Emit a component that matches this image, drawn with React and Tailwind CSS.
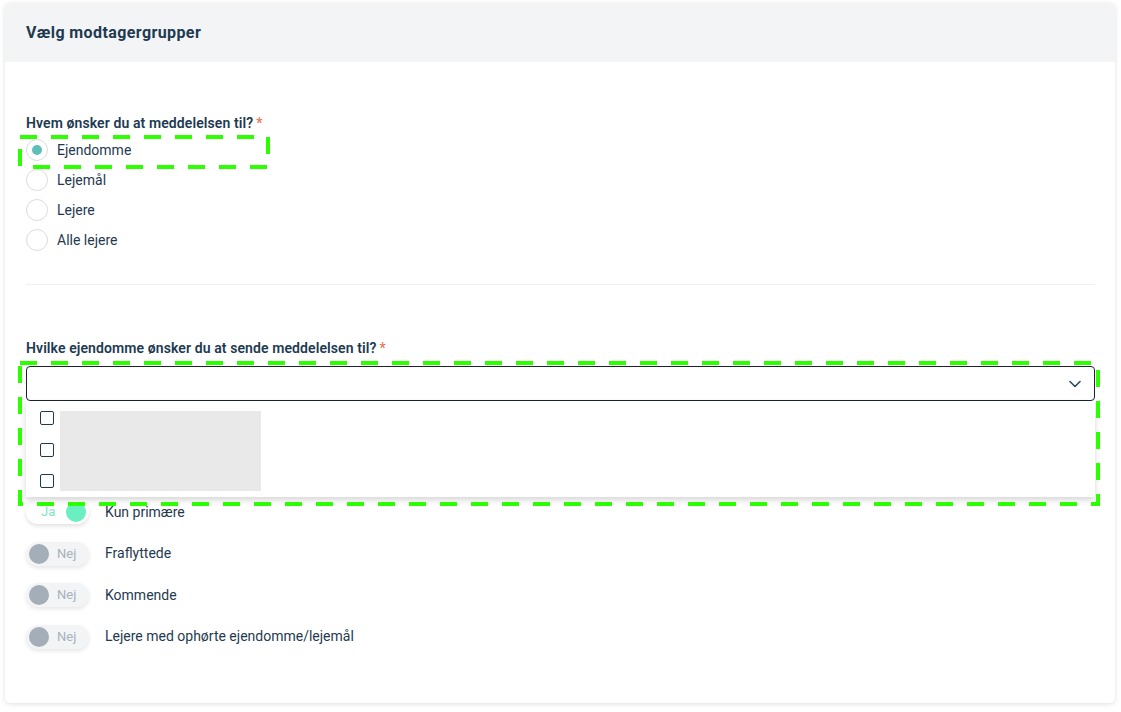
import React from 'react'

const font = { fontFamily: 'Roboto, "Liberation Sans", sans-serif' }

const recipients = ['Ejendomme', 'Lejemål', 'Lejere', 'Alle lejere']

const toggles = [
    { label: 'Kun primære', on: true },
    { label: 'Fraflyttede', on: false },
    { label: 'Kommende', on: false },
    { label: 'Lejere med ophørte ejendomme/lejemål', on: false },
]

function Radio({ checked, label }) {
    return (
        <label className="flex items-center h-[30px] gap-[9px] text-[14px] text-[#1f3a50]">
            <span className="w-[22px] h-[22px] rounded-full border border-[#dcdcdc] bg-white flex items-center justify-center">
                {checked && <span className="w-[10px] h-[10px] rounded-full bg-[#5fbfb8]" />}
            </span>
            {label}
        </label>
    )
}

function Toggle({ on, label }) {
    return (
        <div className="flex items-center gap-[16px] h-[24px]">
            {on ? (
                <div className="w-[63px] h-[24px] rounded-full bg-white shadow-[0_2px_4px_rgba(0,0,0,0.12)] flex items-center justify-between pl-[15px] pr-[3px]">
                    <span className="text-[13px] text-[#7fe6c3]">Ja</span>
                    <span className="w-[20px] h-[20px] rounded-full bg-[#6aefc0]" />
                </div>
            ) : (
                <div className="w-[63px] h-[24px] rounded-full bg-[#f3f4f6] shadow-[0_2px_4px_rgba(0,0,0,0.1)] flex items-center pl-[3px] gap-[8px]">
                    <span className="w-[20px] h-[20px] rounded-full bg-[#a3aeb8]" />
                    <span className="text-[13px] text-[#a8b1bb]">Nej</span>
                </div>
            )}
            <span className="text-[14px] text-[#1f3a50]">{label}</span>
        </div>
    )
}

export default function App() {
    return (
        <div className="relative w-[1121px] h-[712px] bg-white pt-[3px] pl-[5px]" style={font}>
            <div className="w-[1110px] h-[700px] rounded-[5px] bg-white shadow-[0_1px_5px_rgba(0,0,0,0.13)]">
                <div className="h-[59px] bg-[#f3f4f6] rounded-t-[5px] flex items-center px-[21px] pt-[1px]">
                    <h2 className="text-[16px] font-bold tracking-[0.4px] text-[#1d3a51]">Vælg modtagergrupper</h2>
                </div>

                <div className="px-[21px] pt-[51px] pr-[20px]">
                    <div className="text-[14px] font-semibold tracking-[0.1px] text-[#1d3a51] h-[20px] flex items-center">
                        Hvem ønsker du at meddelelsen til?<span className="text-[#f0735a] ml-[3px] font-medium">*</span>
                    </div>
                    <div className="flex flex-col mt-[2px]">
                        {recipients.map((r, i) => (
                            <Radio key={r} label={r} checked={i === 0} />
                        ))}
                    </div>

                    <div className="mt-[29px] border-t border-[#f0f0f0]" />

                    <div className="mt-[53px] text-[14px] font-semibold tracking-[0.1px] text-[#1d3a51] h-[20px] flex items-center">
                        Hvilke ejendomme ønsker du at sende meddelelsen til?<span className="text-[#f0735a] ml-[3px] font-medium">*</span>
                    </div>

                    <div className="relative mt-[8px]">
                        <div className="h-[35px] rounded-[4px] border border-[#1b2234] bg-white flex items-center justify-end pr-[13px]">
                            <svg width="12" height="8" viewBox="0 0 12 8" fill="none">
                                <path d="M1 1.5l5 5 5-5" stroke="#2c4a5e" strokeWidth="1.6" strokeLinecap="round" strokeLinejoin="round" />
                            </svg>
                        </div>
                        <div className="absolute left-0 right-0 top-full h-[96px] bg-white shadow-[0_3px_6px_rgba(0,0,0,0.16)] z-10 flex gap-[6px] pl-[14px] pt-[10px]">
                            <div className="flex flex-col gap-[17.5px]">
                                {[0, 1, 2].map(i => (
                                    <span key={i} className="w-[14px] h-[14px] rounded-[2px] border-[1.5px] border-[#1d3a52] bg-white" />
                                ))}
                            </div>
                            <div className="w-[201px] h-[80px] bg-[#e9e9e9]" />
                        </div>
                    </div>

                    <div className="mt-[99px] flex flex-col gap-[17.5px]">
                        {toggles.map(t => (
                            <Toggle key={t.label} on={t.on} label={t.label} />
                        ))}
                    </div>
                </div>
            </div>

            <svg className="absolute left-0 top-0 pointer-events-none z-20" width="1121" height="712">
                <rect x="20" y="137" width="248" height="30" fill="none" stroke="#2bff00" strokeWidth="4" strokeDasharray="17 14" />
                <rect x="20" y="363" width="1078" height="141" fill="none" stroke="#2bff00" strokeWidth="4" strokeDasharray="17 14" />
            </svg>
        </div>
    )
}
